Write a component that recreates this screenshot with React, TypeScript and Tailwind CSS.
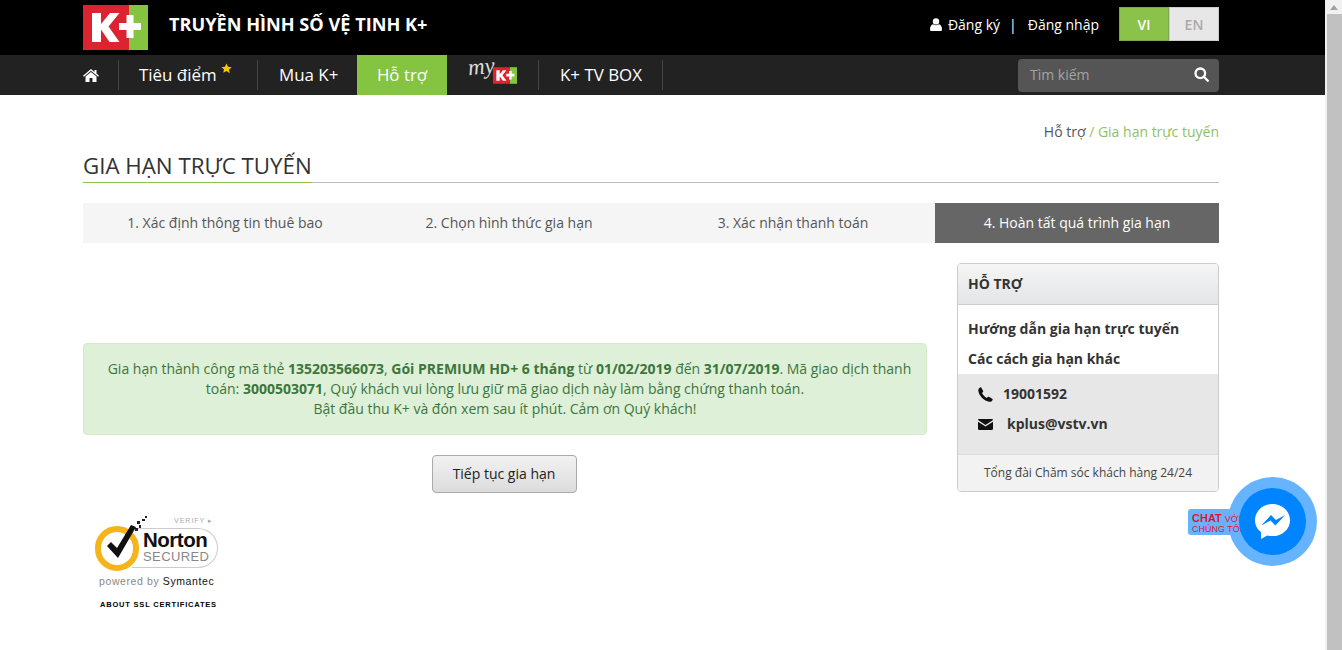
import React from "react";

const KLogo = ({ w, h }: { w: number; h: number }) => (
  <svg width={w} height={h} viewBox="0 0 65 45" className="block shrink-0">
    <rect x="0" y="0" width="46" height="45" fill="#dc2431" />
    <rect x="46" y="0" width="19" height="45" fill="#84c441" />
    <path d="M9 8h9v11L27 8h9.500L25.500 21.500 36.500 37h-10L18 24.500V37H9z" fill="#fff" />
    <path d="M36 18h7.500v-8h7v8H58v7h-7.500v8h-7v-8H36z" fill="#fff" />
  </svg>
);

const Sep = () => <div className="h-[30px] w-px bg-[#444]" />;

export default function App() {
  return (
    <div className="relative flex h-[650px] w-[1342px] overflow-hidden bg-white text-[14px] text-[#333] [font-family:'Open_Sans','Noto_Sans',sans-serif]">
      <div className="w-[1325px] shrink-0">
        <header className="h-[55px] bg-black">
          <div className="ml-[83px] flex h-full w-[1136px] items-start">
            <div className="mt-[5px]">
              <KLogo w={65} h={45} />
            </div>
            <div className="ml-[21px] mt-[12px] text-[18.150px] font-bold leading-[25px] text-white">TRUYỀN HÌNH SỐ VỆ TINH K+</div>
            <div className="ml-auto mt-[7px] flex items-center text-[14px] text-white">
              <svg width="12" height="13" viewBox="0 0 12 13" className="mr-[6px]" fill="#fff">
                <circle cx="6" cy="3.400" r="3.200" />
                <path d="M0 11.500C0 8.500 1.200 6.500 3 6.200c1.800 1.400 4.200 1.400 6 0 1.800.3 3 2.300 3 5.300 0 1-.8 1.500-1.500 1.500h-9C.8 13 0 12.500 0 11.500z" />
              </svg>
              <span>Đăng ký</span>
              <span className="ml-[9px] mr-[11px]">|</span>
              <span>Đăng nhập</span>
              <div className="ml-[20px] flex h-[34px] w-[100px] font-semibold">
                <div className="flex h-full w-[50px] items-center justify-center border border-[#7aa74d] bg-[#8bc34a] text-[14px] text-white">VI</div>
                <div className="flex h-full w-[50px] items-center justify-center border border-[#ccc] bg-[#e7e7e7] text-[14px] text-[#aaa]">EN</div>
              </div>
            </div>
          </div>
        </header>
        <nav className="h-[40px] bg-[#222]">
          <div className="ml-[83px] flex h-full w-[1136px] items-center text-[16.900px] text-white">
            <svg width="16" height="13" viewBox="0 0 16 13" fill="#fff" className="mr-[19px] shrink-0">
              <path d="M8 0 0 6.700l.9 1L8 1.800l7.100 5.900.9-1L13.500 4.600V1h-2v1.900z" />
              <path d="M8 3 2.500 7.600V13h4V9h3v4h4V7.600z" />
            </svg>
            <Sep />
            <div className="relative flex w-[138px] justify-start whitespace-nowrap pl-[20px]">
              Tiêu điểm
              <svg width="11" height="11" viewBox="0 0 24 24" fill="#f7c600" className="absolute left-[102px] top-[1px]">
                <path d="m12 1 3.400 7.200 7.800 1-5.700 5.400 1.500 7.800L12 17.600l-7 3.800 1.500-7.800L.8 9.200l7.800-1z" />
              </svg>
            </div>
            <Sep />
            <div className="w-[99px] pl-[21px]">Mua K+</div>
            <div className="flex h-full w-[90px] items-center justify-center bg-[#84c441] text-white">Hỗ trợ</div>
            <div className="flex h-full w-[91px] shrink-0 items-center justify-center">
              <div className="relative h-[24px] w-[50px]">
                <span className="absolute left-0 -top-[13px] -rotate-6 text-[23px] italic text-[#ddd] [font-family:'Liberation_Serif',serif]">my</span>
                <div className="absolute left-[25px] top-[4px]">
                  <KLogo w={24} h={17} />
                </div>
              </div>
            </div>
            <Sep />
            <div className="w-[123px] whitespace-nowrap pl-[21px]">K+ TV BOX</div>
            <Sep />
            <div className="ml-auto flex h-[33px] w-[201px] items-center justify-between rounded-[4px] bg-[#555] pb-[1px] pl-[12px] pr-[10px] text-[14px] text-[#a3a3a3]">
              <span>Tìm kiếm</span>
              <svg width="15" height="15" viewBox="0 0 15 15" fill="none" stroke="#fff" strokeWidth="2.300">
                <circle cx="6.300" cy="6.300" r="4.800" />
                <path d="m9.800 9.800 4 4" strokeLinecap="round" />
              </svg>
            </div>
          </div>
        </nav>
        <main className="ml-[83px] w-[1136px]">
          <div className="pt-[27px] text-right text-[14px] leading-[20px] text-[#555]">
            Hỗ trợ <span className="text-[#8fbf63]">/ Gia hạn trực tuyến</span>
          </div>
          <div className="mt-[9px] h-[32px] border-b border-[#bbb]">
            <h1 className="inline-block h-[32px] whitespace-nowrap border-b border-[#8bc34a] text-[22.300px] font-normal leading-[30px] text-[#333]">GIA HẠN TRỰC TUYẾN</h1>
          </div>
          <div className="mt-[20px] flex h-[40px] items-center bg-[#f5f5f5] text-[14px] leading-[39px] text-[#555]">
            <div className="h-[40px] w-[284px] text-center">1. Xác định thông tin thuê bao</div>
            <div className="h-[40px] w-[284px] text-center">2. Chọn hình thức gia hạn</div>
            <div className="h-[40px] w-[284px] text-center">3. Xác nhận thanh toán</div>
            <div className="h-[40px] w-[284px] bg-[#666] text-center font-medium text-white">4. Hoàn tất quá trình gia hạn</div>
          </div>
          <div className="mt-[20px] flex items-start justify-between">
            <div className="w-[844px]">
              <div className="mt-[80px] rounded-[4px] border border-[#d6e9c6] bg-[#dff0d8] px-[10px] pb-[15px] pt-[15px] text-center leading-[20px] text-[#3c763d]">
                <span className="ml-[9px]">Gia hạn thành công mã thẻ</span> <b>135203566073</b>, <b>Gói PREMIUM HD+ 6 tháng</b> từ <b>01/02/2019</b> đến <b>31/07/2019</b>. Mã giao dịch thanh toán: <b>3000503071</b>, Quý khách vui lòng lưu giữ mã giao dịch này làm bằng chứng thanh toán.
                <br />
                Bật đầu thu K+ và đón xem sau ít phút. Cảm ơn Quý khách!
              </div>
              <div className="mt-[20px] flex justify-center pr-[2px]">
                <div className="flex h-[38px] w-[145px] items-center justify-center rounded-[4px] border border-[#aaa] bg-gradient-to-b from-[#f2f2f2] to-[#dcdcdc] pb-[2px] text-[14px] text-[#222]">Tiếp tục gia hạn</div>
              </div>
              <div className="relative ml-[9px] mt-[23px] h-[100px] w-[140px] [font-family:'Liberation_Sans',sans-serif]">
                <div className="absolute left-[40px] top-[12px] h-[40px] w-[86px] rounded-r-[20px] border border-l-0 border-[#ccc]" />
                <div className="absolute left-[3px] top-[10px] h-[45px] w-[44px] rounded-full border-[6px] border-[#f4b41a] bg-white" />
                <svg width="56" height="56" viewBox="0 0 56 56" className="absolute left-[3px] top-[-3px]">
                  <path d="M12 33l4-4 6 6 14-23 5 2-18 31z" fill="#111" />
                  <path d="M40 15h3v3h-3zM44 12h2v3h-2zM42 8h3v3h-3zM47 6h3v2h-3zM50 3h2v2h-2z" fill="#222" />
                </svg>
                <div className="absolute left-[82px] top-0 text-[7px] leading-[9px] tracking-[1px] text-[#aaa]">VERIFY ▸</div>
                <div className="absolute left-[51px] top-[13px] text-[20.500px] font-bold leading-[22px] tracking-[-0.5px] text-[#111]">Norton</div>
                <div className="absolute left-[51px] top-[34px] text-[13px] leading-[14px] tracking-[0.4px] text-[#888]">SECURED</div>
                <div className="absolute left-[7px] top-[59px] whitespace-nowrap text-[10.500px] leading-[12px] tracking-[0.6px] text-[#888]">powered by <span className="text-[#111]">Symantec</span></div>
                <div className="absolute left-[8px] top-[84px] whitespace-nowrap text-[7.500px] font-bold leading-[9px] tracking-[0.8px] text-black">ABOUT SSL CERTIFICATES</div>
              </div>
            </div>
            <aside className="w-[262px] overflow-hidden rounded-[4px] border border-[#ccc]">
              <div className="flex h-[41px] items-center border-b border-[#ccc] bg-gradient-to-b from-[#f5f5f5] to-[#e3e5e6] px-[10px] pb-[2px] font-bold text-[#333]">HỖ TRỢ</div>
              <div className="px-[10px] pt-[9px] font-bold leading-[20px]">
                <div className="pt-[5px]">Hướng dẫn gia hạn trực tuyến</div>
                <div className="pb-[5px] pt-[10px]">Các cách gia hạn khác</div>
              </div>
              <div className="h-[81px] border-b border-[#ddd] bg-[#e7e7e7] pl-[20px] font-bold leading-[20px] text-[#333]">
                <div className="flex h-[40px] items-center">
                  <svg width="15" height="15" viewBox="0 0 15 15" fill="#111" className="mr-[10px]">
                    <path d="M3.200.6 5.200 4c.2.4.1.8-.2 1.100l-1 .9c.9 2 2.700 3.900 4.800 5l1-1c.3-.3.8-.4 1.100-.2l3.400 2c.4.200.5.700.3 1.100-.9 1.500-2 2-3.300 1.800C6 13.900 1.200 9 .3 4 0 2.700.6 1.500 2.100.4c.4-.2.900-.2 1.100.2z" />
                  </svg>
                  <span>19001592</span>
                </div>
                <div className="flex h-[20px] items-center">
                  <svg width="15" height="11" viewBox="0 0 15 11" fill="#111" className="mr-[14px]">
                    <path d="M1.200 0h12.600c.7 0 1.200.5 1.200 1.100L7.500 6 0 1.100C0 .5.500 0 1.200 0z" />
                    <path d="M0 2.700 7.500 7.500 15 2.700v7.100c0 .7-.5 1.200-1.200 1.200H1.200C.5 11 0 10.500 0 9.800z" />
                  </svg>
                  <span>kplus@vstv.vn</span>
                </div>
              </div>
              <div className="flex h-[36px] items-center justify-center bg-[#f2f2f2] text-[12px] text-[#444]">Tổng đài Chăm sóc khách hàng 24/24</div>
            </aside>
          </div>
        </main>
      </div>
      <div className="flex w-[17px] shrink-0 flex-col bg-[#f1f1f1]">
        <div className="flex h-[14px] items-center justify-center">
          <div className="h-0 w-0 border-x-[4px] border-b-[5px] border-x-transparent border-b-[#a3a3a3]" />
        </div>
        <div className="ml-[2px] flex-1 bg-[#c1c1c1]" />
      </div>
      <div className="absolute left-[1228px] top-[477px] h-[89px] w-[89px] rounded-full bg-[#66b3ff]" />
      <div className="absolute left-[1188px] top-[509px] h-[26px] w-[60px] overflow-hidden rounded-[3px] bg-[#66b3ff] [font-family:'Liberation_Sans',sans-serif]">
        <div className="whitespace-nowrap pl-[4px] pt-[4px] text-[11px] font-bold leading-[11px] text-[#e8112d]">CHAT <span className="text-[9px] font-normal">VỚI</span></div>
        <div className="whitespace-nowrap pl-[4px] text-[9px] leading-[9px] text-[#e8112d]">CHÚNG TÔI</div>
      </div>
      <div className="absolute left-[1239px] top-[488px] flex h-[67px] w-[67px] items-center justify-center rounded-full bg-[#0084ff]">
        <svg width="37" height="37" viewBox="0 0 38 38">
          <path d="M19 1C9 1 1 8.500 1 17.600c0 5 2.400 9.300 6.200 12.300V37l6.500-3.700c1.700.5 3.400.7 5.300.7 10 0 18-7.300 18-16.400S29 1 19 1z" fill="#fff" />
          <path d="m7.500 23 10-10.600 5 5.100 9.500-5.100-10 10.700-5-5.100z" fill="#0084ff" />
        </svg>
      </div>
    </div>
  );
}
